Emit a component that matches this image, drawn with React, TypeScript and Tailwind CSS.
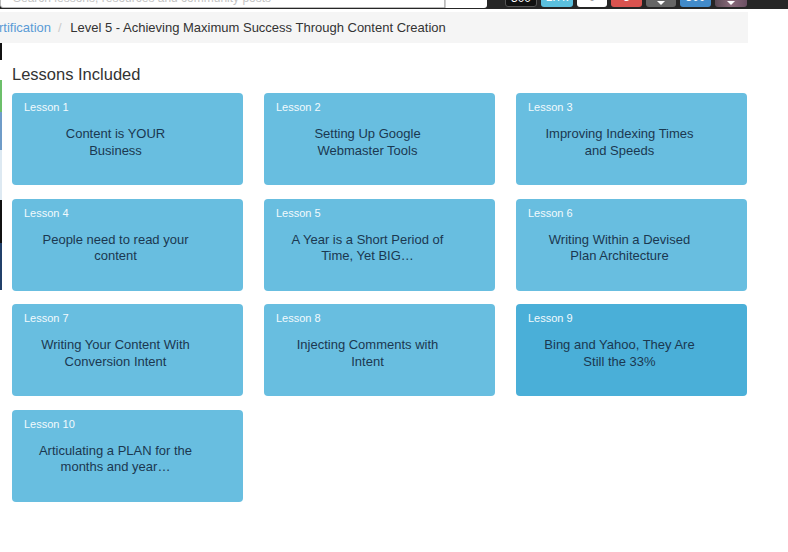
const lessons = [
  { n: 1, title: "Content is YOUR Business" },
  { n: 2, title: "Setting Up Google Webmaster Tools" },
  { n: 3, title: "Improving Indexing Times and Speeds" },
  { n: 4, title: "People need to read your content" },
  { n: 5, title: "A Year is a Short Period of Time, Yet BIG…" },
  { n: 6, title: "Writing Within a Devised Plan Architecture" },
  { n: 7, title: "Writing Your Content With Conversion Intent" },
  { n: 8, title: "Injecting Comments with Intent" },
  { n: 9, title: "Bing and Yahoo, They Are Still the 33%", active: true },
  { n: 10, title: "Articulating a PLAN for the months and year…" },
];

function TopBar() {
  return (
    <div className="flex h-[9px] items-start overflow-hidden bg-[#262626]">
      <div className="-mt-[13px] flex h-[21px] w-[445px] items-center rounded-bl-[3px] border border-[#bbb] bg-white px-3 text-[12px] text-[#c4c4c4]">
        Search lessons, resources and community posts
      </div>
      <div className="-mt-[13px] h-[21px] w-[42px] rounded-br-[3px] border-l border-[#ccc] bg-white" />
      <div className="-mt-[13px] ml-[18px] flex gap-[4px] text-[12px] leading-[20px]">
        <span className="h-[20px] w-[32px] rounded-[3px] border border-[#555] bg-[#111] text-center text-white">300</span>
        <span className="h-[20px] w-[32px] rounded-[3px] bg-[#5bc0de] text-center text-white">1.7k</span>
        <span className="h-[20px] w-[30px] rounded-[3px] bg-white text-center text-[#999]">0</span>
        <span className="h-[20px] w-[31px] rounded-[3px] bg-[#d9534f] text-center text-white">3</span>
        <span className="flex h-[20px] w-[30px] items-end justify-center rounded-[3px] bg-[#666] pb-[2px]">
          <span className="h-0 w-0 border-x-[4px] border-t-[4px] border-x-transparent border-t-white" />
        </span>
        <span className="h-[20px] w-[31px] rounded-[3px] bg-[#428bca] text-center text-white">300</span>
        <span className="flex h-[20px] w-[32px] items-end justify-center rounded-[3px] bg-gradient-to-r from-[#5b4a55] via-[#8a6a7a] to-[#6b4f63] pb-[2px]">
          <span className="h-0 w-0 border-x-[4px] border-t-[4px] border-x-transparent border-t-white" />
        </span>
      </div>
    </div>
  );
}

function Breadcrumb() {
  return (
    <div className="mt-[3px] flex h-[31px] w-[748px] items-center overflow-hidden bg-[#f5f5f5] text-[13px] leading-[18px]">
      <span className="-ml-[17.6px] whitespace-nowrap text-[#5a9bd5]">Certification</span>
      <span className="ml-[2px] px-[5px] text-[#ccc]">/&nbsp;</span>
      <span className="whitespace-nowrap text-[#333]">
        Level 5 - Achieving Maximum Success Through Content Creation
      </span>
    </div>
  );
}

function LessonCard({ n, title, active }: { n: number; title: string; active?: boolean }) {
  return (
    <div
      className={
        active
          ? "h-[92px] rounded-[4px] bg-[#4aafd8] px-3 pt-[8px]"
          : "h-[92px] rounded-[4px] bg-[#68bee0] px-3 pt-[8px]"
      }
    >
      <div className="text-[11px] leading-[13px] text-[#f2fafd]">Lesson {n}</div>
      <div className="mt-3 pl-[14px] pr-[38px] text-center text-[13px] leading-[16.5px] text-[#1b3850]">
        {title}
      </div>
    </div>
  );
}

export default function App() {
  return (
    <div className="h-[552px] w-[788px] overflow-hidden bg-white font-['Liberation_Sans',Arial,sans-serif]">
      <TopBar />
      <Breadcrumb />
      <div className="flex">
        <div className="flex w-[2px] shrink-0 flex-col">
          <div className="h-[17px] bg-[#111]" />
          <div className="h-[20px] bg-white" />
          <div className="h-[32px] bg-[#6cbf6a]" />
          <div className="h-[38px] bg-[#6f9cc8]" />
          <div className="h-[50px] bg-[#dde9f2]" />
          <div className="h-[43px] bg-[#111]" />
          <div className="h-[47px] bg-[#21406a]" />
        </div>
        <div className="pl-[10px]">
          <h2 className="mt-[21px] text-[16.5px] leading-[20px] text-[#333]">Lessons Included</h2>
          <div className="mt-[9px] grid w-[735px] grid-cols-3 gap-x-[21px] gap-y-[13.5px]">
            {lessons.map((l) => (
              <LessonCard key={l.n} n={l.n} title={l.title} active={l.active} />
            ))}
          </div>
        </div>
      </div>
    </div>
  );
}
